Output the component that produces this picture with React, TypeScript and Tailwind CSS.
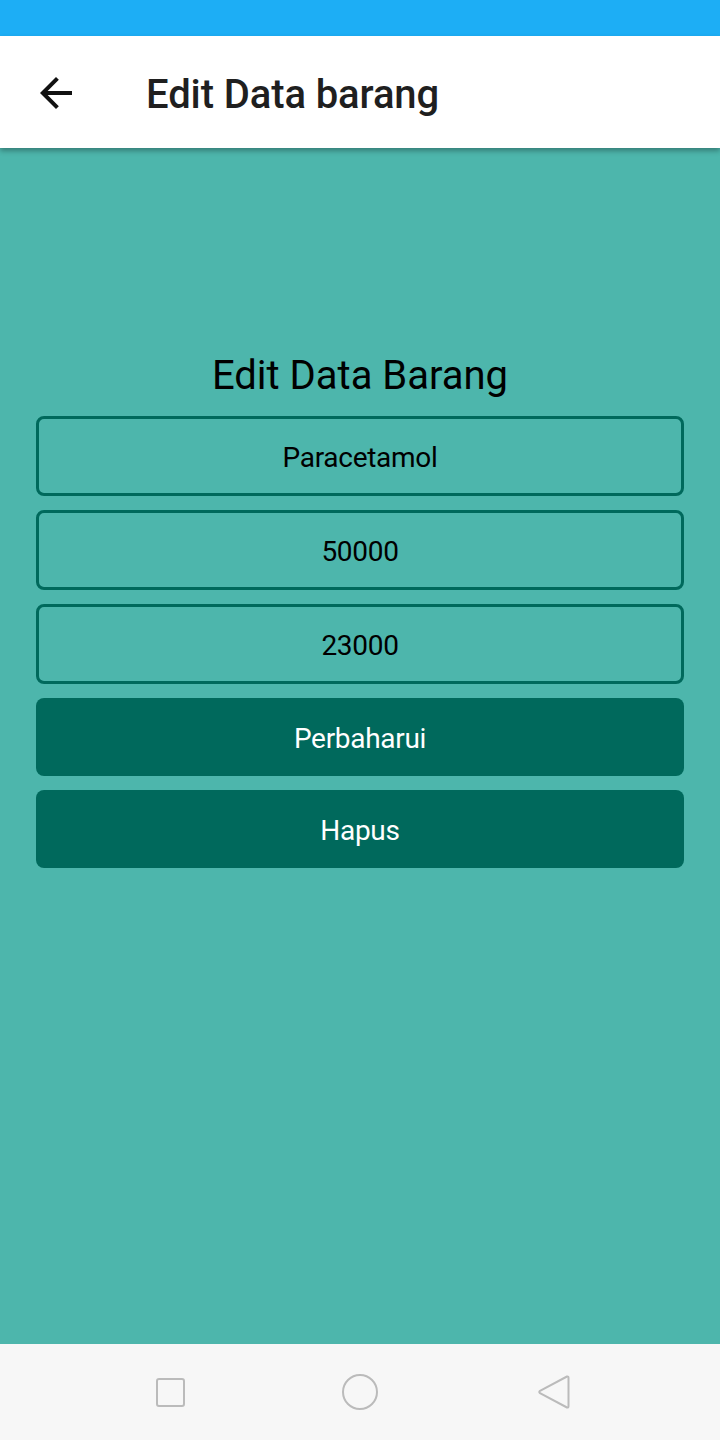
import React from "react";

export default function App() {
  return (
    <div className="w-[720px] h-[1440px] flex flex-col bg-[#4db6ac]" style={{ fontFamily: "Roboto, sans-serif" }}>
      <div className="h-[36px] bg-[#1daef5] shrink-0" />
      <div className="h-[112px] bg-white shrink-0 flex items-center shadow-[0_3px_5px_rgba(0,0,0,0.3)] relative z-10">
        <div className="w-[146px] flex items-center pl-[32px] pt-[2px]">
          <svg width="48" height="48" viewBox="0 0 24 24">
            <path d="M20 11H7.83l5.59-5.59L12 4l-8 8 8 8 1.41-1.41L7.83 13H20v-2z" fill="#111" />
          </svg>
        </div>
        <span className="text-[40px] font-medium text-[#1f1f1f] leading-none tracking-[-0.1px] pt-[5px]">Edit Data barang</span>
      </div>
      <div className="flex-1 flex flex-col items-stretch px-[36px] pt-[208px]">
        <div className="text-center text-[40px] leading-none text-black mb-[20px]">Edit Data Barang</div>
        <div className="flex flex-col gap-[14px]">
          {["Paracetamol", "50000", "23000"].map((v) => (
            <div key={v} className="h-[80px] border-[3px] border-[#00695c] rounded-[8px] flex items-center justify-center text-[28px] text-black pt-[3px] tracking-[-0.3px]">
              {v}
            </div>
          ))}
          <div className="h-[78px] bg-[#00695c] rounded-[8px] flex items-center justify-center text-[28px] text-white pt-[3px] tracking-[-0.3px]">Perbaharui</div>
          <div className="h-[78px] bg-[#00695c] rounded-[8px] flex items-center justify-center text-[28px] text-white pt-[3px] tracking-[-0.3px]">Hapus</div>
        </div>
      </div>
      <div className="h-[96px] bg-[#f7f7f7] shrink-0 flex items-center justify-center pl-[3px]">
        <div className="w-[40px] flex justify-center">
          <div className="w-[29px] h-[29px] border-[2px] border-[#bbbbbb] rounded-[3px]" />
        </div>
        <div className="w-[150px]" />
        <div className="w-[40px] flex justify-center">
          <div className="w-[36px] h-[36px] border-[2px] border-[#bbbbbb] rounded-full" />
        </div>
        <div className="w-[153px]" />
        <div className="w-[40px] flex justify-center">
          <svg width="36" height="36" viewBox="0 0 36 36">
            <path d="M32 2.5 Q33.5 2 33.5 4 L33.5 32 Q33.5 34 32 33.5 L5 19.2 Q3.5 18 5 16.8 Z" fill="none" stroke="#bbbbbb" strokeWidth="2" strokeLinejoin="round" />
          </svg>
        </div>
      </div>
    </div>
  );
}
